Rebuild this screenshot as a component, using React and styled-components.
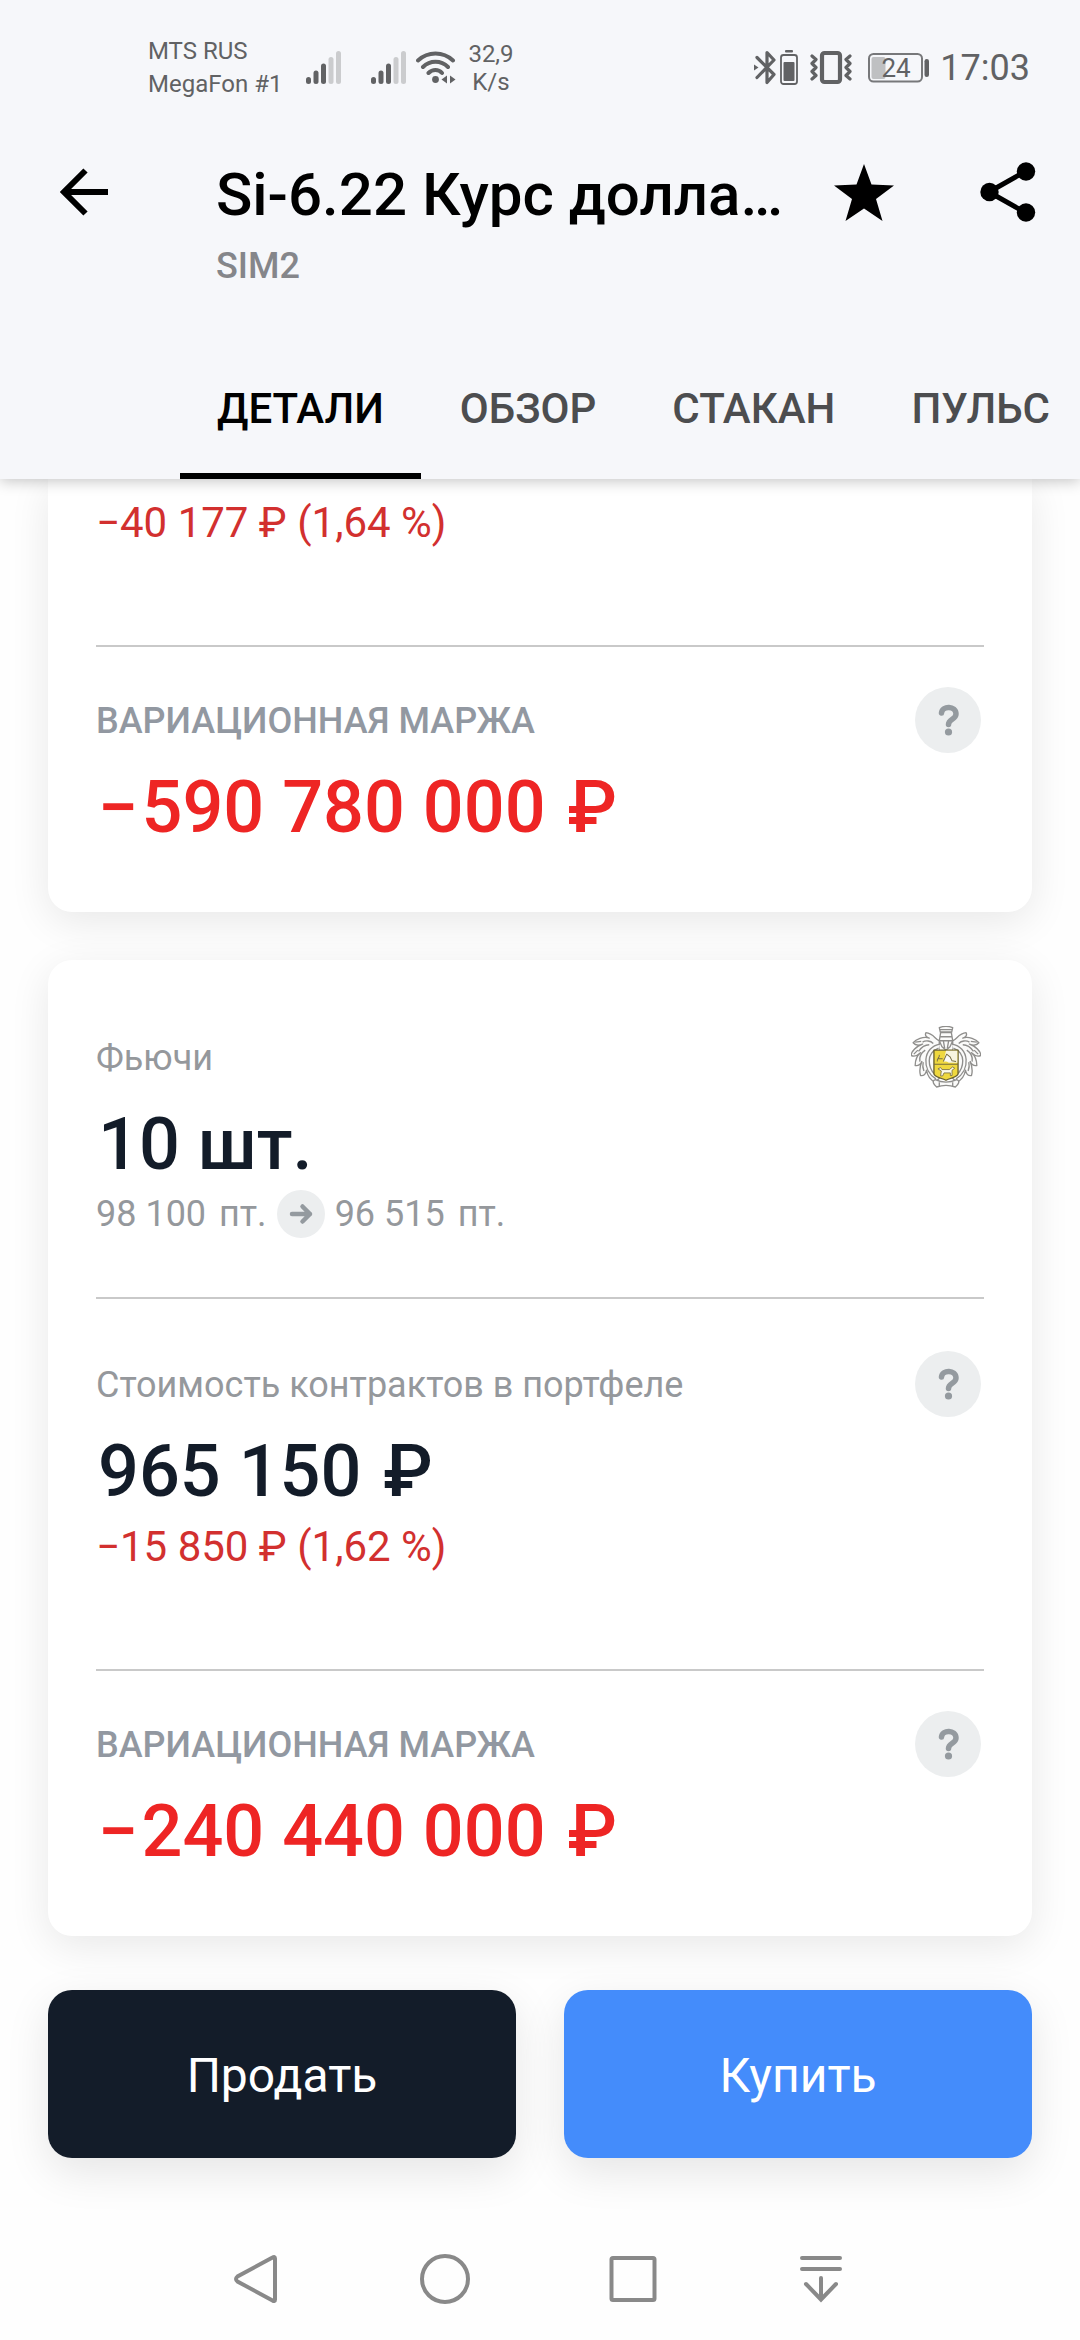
import styled, { createGlobalStyle } from 'styled-components'

const GlobalStyle = createGlobalStyle`
  * { box-sizing: border-box; }
  body {
    margin: 0;
    background: #fefefe;
    font-family: Roboto, "Noto Sans", sans-serif;
    color: #131c29;
    overflow-x: hidden;
  }
  button {
    font: inherit;
    border: 0;
    padding: 0;
    background: none;
    cursor: pointer;
  }
  h1, h2, p { margin: 0; }
  svg { display: block; }
`

const Page = styled.div`
  display: flex;
  flex-direction: column;
  overflow: hidden;
`

/* header */
const Header = styled.header`
  position: relative;
  z-index: 1;
  background: #f6f7fa;
  box-shadow: 0 2px 14px rgba(0, 0, 0, 0.24);
`
const StatusBar = styled.div`
  display: flex;
  align-items: center;
  height: 134px;
  padding: 1px 50px 0 148px;
  color: #616264;
  font-size: 24px;
`
const Carrier = styled.div`
  line-height: 33px;
  margin-right: 24px;
`
const Signals = styled.div`
  display: flex;
  gap: 30px;
  margin-right: 10px;
`
const Speed = styled.div`
  line-height: 28px;
  text-align: center;
  margin-left: 12px;
`
const StatusRight = styled.div`
  display: flex;
  align-items: center;
  margin-left: auto;
`
const StatusGlyphs = styled.div`
  display: flex;
  align-items: center;
  gap: ${p => p.$gap};
  margin-right: ${p => p.$after};
`
const Clock = styled.time`
  font-size: 36px;
  line-height: 44px;
`
const Toolbar = styled.div`
  display: flex;
  align-items: flex-start;
  padding: 24px 36px 0 48px;
`
const IconButton = styled.button`
  display: flex;
  align-items: center;
  justify-content: center;
  flex: none;
  width: 72px;
  height: 68px;
  color: #000;
`
const Heading = styled.div`
  flex: 1;
  min-width: 0;
  margin: 0 44px 0 96px;
`
const Title = styled.h1`
  font-size: 60px;
  font-weight: 500;
  line-height: 74px;
  color: #000;
  white-space: nowrap;
`
const Subtitle = styled.p`
  margin-top: 12px;
  font-size: 36px;
  font-weight: 500;
  line-height: 44px;
  color: #85868a;
`
const Actions = styled.div`
  display: flex;
  gap: 72px;
`
const Tabs = styled.nav`
  display: flex;
  margin-top: 47px;
  padding-left: 180px;
`
const Tab = styled.button`
  flex: none;
  height: 144px;
  padding: 2px 37px 0;
  margin-right: 2px;
  font-size: 42px;
  font-weight: 500;
  color: ${p => (p.$active ? '#000' : '#4c4d4f')};
  box-shadow: ${p => (p.$active ? 'inset 0 -6px #000' : 'none')};
`

/* cards */
const Content = styled.main`
  display: flex;
  flex-direction: column;
  gap: 48px;
  padding: 0 48px;
`
const Card = styled.section`
  padding: 0 48px;
  background: #fff;
  border-radius: ${p => (p.$cut ? '0 0 24px 24px' : '24px')};
  box-shadow: 0 10px 40px rgba(0, 0, 0, 0.09);
`
const Block = styled.div`
  padding: ${p => p.$pad};
  & + & { border-top: 2px solid #c9c9c9; }
`
const Row = styled.div`
  display: flex;
  align-items: center;
  justify-content: space-between;
  height: 66px;
  padding-right: 3px;
`
const Label = styled.h2`
  padding-top: 2px;
  font-size: 36px;
  font-weight: ${p => (p.$strong ? 500 : 400)};
  line-height: 44px;
  color: ${p => (p.$strong ? '#9298a1' : '#95989c')};
`
const Amount = styled.p`
  margin-top: 12px;
  padding-left: 2px;
  font-size: 72px;
  font-weight: 500;
  line-height: 86px;
  color: ${p => (p.$loss ? '#ee2524' : '#131c29')};
`
const Sign = styled.span`
  margin-right: 3px;
`
const Unit = styled.span`
  margin-left: 4px;
`
const Change = styled.p`
  font-size: 42px;
  line-height: 48px;
  color: #d2302f;
  ${Amount} + & { margin-top: 8px; }
`
const Points = styled.div`
  display: flex;
  align-items: center;
  gap: 10px;
  height: 48px;
  margin-top: 2px;
  font-size: 36px;
  color: #95989c;
`
const Help = styled.button`
  width: 66px;
  height: 66px;
  border-radius: 50%;
  background: #eceeef;
`

/* footer */
const Trade = styled.div`
  display: flex;
  gap: 48px;
  padding: 54px 48px 61px;
`
const TradeButton = styled.button`
  flex: 1;
  height: 168px;
  padding-top: 2px;
  border-radius: 24px;
  font-size: 48px;
  color: #fff;
  background: ${p => (p.$buy ? '#448cfb' : '#131c29')};
  box-shadow: 0 14px 44px rgba(0, 0, 0, 0.1);
`
const SystemNav = styled.nav`
  position: relative;
  display: flex;
  justify-content: center;
  gap: 116px;
  padding-right: 2px;
  background: #fefefe;
`
const NavButton = styled.button`
  display: flex;
  align-items: center;
  justify-content: center;
  width: 72px;
  height: 120px;
`

const Signal = () => (
  <svg width="35" height="33" viewBox="0 0 35 33" fill="#616264">
    <rect x="0" y="26" width="5" height="7" rx="2.5" />
    <rect x="7.5" y="19.5" width="5" height="13.5" rx="2.5" />
    <rect x="15" y="12.5" width="5" height="20.5" rx="2.5" />
    <rect x="22.5" y="6" width="5" height="27" rx="2.5" fill="#cbccce" />
    <rect x="30" y="0" width="5" height="33" rx="2.5" fill="#cbccce" />
  </svg>
)

const Wifi = () => (
  <svg width="40" height="33" viewBox="0 0 40 33" fill="none" stroke="#616264" strokeWidth="4" strokeLinecap="round">
    <path d="M2 9.5C12 .2 27 .2 37 9.5M7 16C14 9 25 9 32 16M12.500 22C16.500 18 22.500 18 26 22" />
    <circle cx="19.5" cy="28.5" r="3.4" fill="#616264" stroke="none" />
    <path d="M31 24.500V32.500L25.500 28.500ZM34 24.500V32.500L39.500 28.500Z" fill="#616264" stroke="none" />
  </svg>
)

const Bluetooth = () => (
  <svg width="22" height="35" viewBox="0 0 22 35" fill="none" stroke="#616264" strokeWidth="3.2" strokeLinecap="round" strokeLinejoin="round">
    <path d="M3 7.500 20 24.500 13 32.500V2.500L20 10 3 27.500" />
    <path d="M0 14.500 4.500 17.500 0 20.500Z" fill="#616264" stroke="none" />
  </svg>
)

const DeviceBattery = () => (
  <svg width="18" height="35" viewBox="0 0 18 35">
    <rect x="5" y="0" width="8" height="2.5" rx="1" fill="#616264" />
    <rect x="1" y="5" width="16" height="29" rx="2.5" fill="none" stroke="#616264" strokeWidth="1.8" />
    <rect x="3.5" y="12" width="11" height="19" rx="1" fill="#616264" />
  </svg>
)

const Vibrate = () => (
  <svg width="42" height="35" viewBox="0 0 42 35" fill="none" stroke="#616264" strokeLinecap="round" strokeLinejoin="round">
    <rect x="12" y="3" width="18" height="29" rx="2.5" strokeWidth="4.2" />
    <path d="M2 6 6 9.500 2 13.500 6 17.500 2 21.500 6 25.500 2 29M40 6 36 9.500 40 13.500 36 17.500 40 21.500 36 25.500 40 29" strokeWidth="3.2" />
  </svg>
)

const Battery = () => (
  <svg width="62" height="30" viewBox="0 0 62 30">
    <rect x="1" y="1" width="53" height="27.5" rx="4.5" fill="none" stroke="#77787a" strokeWidth="2" />
    <rect x="3.5" y="4" width="14" height="22" rx="2" fill="#bfc0c2" />
    <rect x="56.5" y="6" width="4.5" height="18" rx="2.2" fill="#616264" />
    <text x="28" y="24" fontSize="26" textAnchor="middle" fill="#616264">24</text>
  </svg>
)

const BackIcon = () => (
  <svg width="48" height="48" viewBox="0 0 48 48" fill="none" stroke="currentColor" strokeWidth="6">
    <path d="M48 24H5M25.500 2.500 4 24 25.500 45.500" />
  </svg>
)

const StarIcon = () => (
  <svg width="60" height="57" viewBox="0 0 60 57" fill="currentColor">
    <path d="M30 0 37.500 20.500 60 21.500 42 35 48.500 57 30 44.500 11.500 57 18 35 0 21.500 22.500 20.500Z" />
  </svg>
)

const ShareIcon = () => (
  <svg width="56" height="60" viewBox="0 0 56 60" fill="currentColor">
    <path d="M9 30 46 9M9 30 46 51" stroke="currentColor" strokeWidth="5" />
    <circle cx="9.5" cy="30" r="9.2" />
    <circle cx="46" cy="9.5" r="9.2" />
    <circle cx="46" cy="50.5" r="9.2" />
  </svg>
)

const HelpButton = () => (
  <Help aria-label="Подсказка">
    <svg width="66" height="66" viewBox="0 0 66 66" fill="none" stroke="#949a9f" strokeWidth="5.5" strokeLinecap="round">
      <path d="M26.500 26C27 18.500 41 18.500 41 27C41 32.500 33.500 32 33.500 37.500" />
      <circle cx="33.5" cy="45" r="3.6" fill="#949a9f" stroke="none" />
    </svg>
  </Help>
)

const ArrowBadge = () => (
  <svg width="48" height="48" viewBox="0 0 48 48" fill="none" stroke="#949a9f" strokeWidth="4.5" strokeLinecap="round" strokeLinejoin="round">
    <circle cx="24" cy="24" r="24" fill="#eceeef" stroke="none" />
    <path d="M15 24H33M25.500 16.500 33 24 25.500 31.500" />
  </svg>
)

const Leaves = () => (
  <>
    <path d="M84 44C72 40 66 22 44 20C40 28 46 34 54 36C36 30 14 40 6 50C14 60 24 58 34 54C16 60 0 76 0 88C10 92 20 88 28 80C16 90 12 104 12 118C22 120 28 114 32 106C26 120 24 134 28 148C38 150 44 142 46 132C48 146 56 160 72 168L84 156Z" />
    <path d="M86 54C62 58 46 76 44 100C42 124 54 146 74 158M82 66C64 72 54 88 54 104C54 120 60 134 70 144M34 48C44 42 58 44 66 52M22 76C30 64 42 56 54 56M26 106C24 94 30 80 42 72M38 134C34 124 34 116 36 108M12 48 30 46M8 84 20 72" />
  </>
)

const Emblem = () => (
  <svg width="70" height="63" viewBox="0 0 208 188" role="img" aria-label="Тинькофф" fill="#fbfbfa" stroke="#8f8e8c" strokeWidth="4" strokeLinejoin="round">
    <Leaves />
    <g transform="translate(208 0) scale(-1 1)"><Leaves /></g>
    <path d="M72 160C60 164 68 176 76 182C94 176 114 176 132 182C140 176 148 164 136 160C114 170 94 170 72 160ZM84 168V178M124 168V178" />
    <path d="M84 5C96 0 112 0 124 5L121 18H87ZM86 11H122" />
    <path d="M88 20H120L124 44 116 62 104 72 92 62 84 44ZM86 32H122M85 44H123M96 44 100 66M112 44 108 66" />
    <path d="M68 72H140V142C140 154 118 154 104 162C90 154 68 154 68 142Z" fill="#efd83f" stroke="#69602f" />
    <path d="M104 74H138V110H112L98 100Z" fill="#f7f4df" stroke="none" />
    <path d="M68 114H140M78 106C76 94 86 96 84 86M80 98H94M96 106 106 84 116 92 122 104 134 106" stroke="#776d3e" strokeWidth="3" />
    <path d="M80 128 88 124 92 130H114L124 122 130 126 122 132V148H117V140H98L94 149H88L90 134Z" fill="#fcfae9" stroke="#776d3e" strokeWidth="2.5" />
  </svg>
)

const Margin = ({ value }) => (
  <Block $pad="40px 0 61px">
    <Row>
      <Label $strong>ВАРИАЦИОННАЯ МАРЖА</Label>
      <HelpButton />
    </Row>
    <Amount $loss><Sign>−</Sign>{value} <Unit>₽</Unit></Amount>
  </Block>
)

const tabs = ['ДЕТАЛИ', 'ОБЗОР', 'СТАКАН', 'ПУЛЬС']

const navIcons = [
  { label: 'Назад', d: 'M43 5.500V46.500Q43 49 40.500 47.500L5.500 28.500Q2.500 26 5.500 23.500L40.500 4.500Q43 3 43 5.500Z' },
  { label: 'Домой', d: 'M25 3A23 23 0 1 1 25 49A23 23 0 1 1 25 3Z' },
  { label: 'Недавние', d: 'M5 5H45Q46.500 5 46.500 6.500V45.500Q46.500 47 45 47H5Q3.500 47 3.500 45.500V6.500Q3.500 5 5 5Z' },
  { label: 'Шторка', d: 'M6 5H44M6 16H44M25 25V46M10 31 25 46.500 40 31' },
]

function App() {
  return (
    <>
      <GlobalStyle />
      <Page>
        <Header>
          <StatusBar>
            <Carrier>MTS RUS<br />MegaFon #1</Carrier>
            <Signals><Signal /><Signal /></Signals>
            <Wifi />
            <Speed>32,9<br />K/s</Speed>
            <StatusRight>
              <StatusGlyphs $gap="4px" $after="12px">
                <Bluetooth />
                <DeviceBattery />
              </StatusGlyphs>
              <StatusGlyphs $gap="16px" $after="10px">
                <Vibrate />
                <Battery />
              </StatusGlyphs>
              <Clock>17:03</Clock>
            </StatusRight>
          </StatusBar>
          <Toolbar>
            <IconButton aria-label="Назад"><BackIcon /></IconButton>
            <Heading>
              <Title>Si-6.22 Курс долла…</Title>
              <Subtitle>SIM2</Subtitle>
            </Heading>
            <Actions>
              <IconButton aria-label="В избранное"><StarIcon /></IconButton>
              <IconButton aria-label="Поделиться"><ShareIcon /></IconButton>
            </Actions>
          </Toolbar>
          <Tabs>
            {tabs.map((tab, i) => <Tab key={tab} $active={i === 0}>{tab}</Tab>)}
          </Tabs>
        </Header>

        <Content>
          {/* top of this card is scrolled under the header */}
          <Card $cut>
            <Block $pad="20px 0 98px">
              <Change>−40 177 ₽ (1,64 %)</Change>
            </Block>
            <Margin value="590 780 000" />
          </Card>

          <Card>
            <Block $pad="64px 0 59px">
              <Row>
                <Label>Фьючи</Label>
                <Emblem />
              </Row>
              <Amount>10 шт.</Amount>
              <Points>
                <span>98 100 <Unit>пт.</Unit></span>
                <ArrowBadge />
                <span>96 515 <Unit>пт.</Unit></span>
              </Points>
            </Block>
            <Block $pad="52px 0 98px">
              <Row>
                <Label>Стоимость контрактов в портфеле</Label>
                <HelpButton />
              </Row>
              <Amount>965 150 <Unit>₽</Unit></Amount>
              <Change>−15 850 ₽ (1,62 %)</Change>
            </Block>
            <Margin value="240 440 000" />
          </Card>
        </Content>

        <Trade>
          <TradeButton>Продать</TradeButton>
          <TradeButton $buy>Купить</TradeButton>
        </Trade>

        <SystemNav>
          {navIcons.map(({ label, d }) => (
            <NavButton key={label} aria-label={label}>
              <svg width="50" height="52" viewBox="0 0 50 52" fill="none" stroke="#898989" strokeWidth="4" strokeLinecap="round">
                <path d={d} />
              </svg>
            </NavButton>
          ))}
        </SystemNav>
      </Page>
    </>
  )
}

export default App
